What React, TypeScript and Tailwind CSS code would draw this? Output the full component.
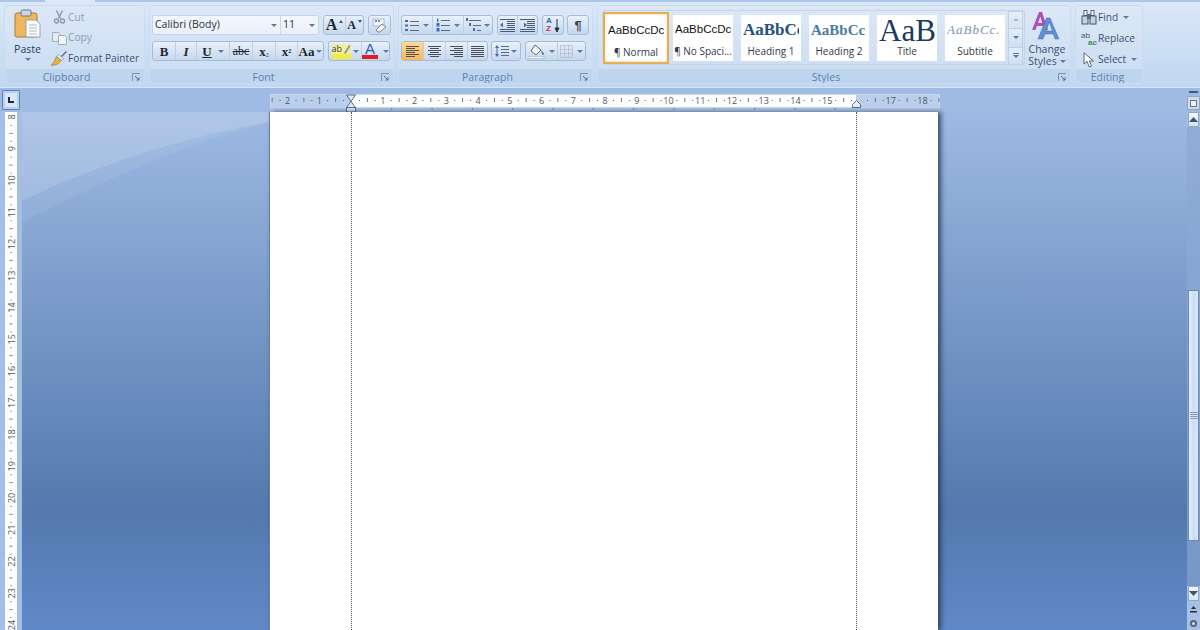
import type { ReactNode } from "react";

const Arrow = ({ c = "border-t-[#5b7ba6]" }: { c?: string }) => (
  <span className={`inline-block w-0 h-0 border-x-[3px] border-t-[3px] border-x-transparent ${c}`} />
);

const Launcher = () => (
  <svg width="9" height="9" viewBox="0 0 9 9" className="shrink-0">
    <path d="M0.5 8V0.5H8" fill="none" stroke="#7d93b0" />
    <path d="M3 3l4 4M7 4.5V7H4.5" fill="none" stroke="#4f6d94" />
  </svg>
);

function Group({ label, w, launcher = true, children }: { label: string; w: string; launcher?: boolean; children: ReactNode }) {
  return (
    <div className={`${w} h-[79px] shrink-0 flex flex-col rounded-[4px] border border-[#c9dcf1] bg-gradient-to-b from-[#dde8f6] to-[#c9dcf2] overflow-hidden`}>
      <div className="flex-1 min-h-0">{children}</div>
      <div className="h-[14px] shrink-0 flex items-center bg-[#bdd5ef] pr-[3px] pt-[2px]">
        <span className={`flex-1 text-center text-[10.5px] leading-none text-[#5a82b0] ${launcher ? "pr-[4px]" : ""}`}>{label}</span>
        {launcher && <Launcher />}
      </div>
    </div>
  );
}

const box = "flex rounded-[3px] border border-[#a6bdd9] bg-gradient-to-b from-[#e9f1fb] via-[#d7e4f4] to-[#c5d8ee]";

function Cell({ w, active, last, children }: { w: string; active?: boolean; last?: boolean; children: ReactNode }) {
  return (
    <div className={`${w} flex items-center justify-center gap-[2px] ${last ? "" : "border-r border-[#bccfe6]"} ${active ? "bg-gradient-to-b from-[#fdd99b] to-[#fbb654]" : ""}`}>
      {children}
    </div>
  );
}

function Lines({ x = 6, rows, color = "#5a6a80" }: { x?: number; rows: [number, number][]; color?: string }) {
  return (
    <>
      {rows.map(([y, w], i) => (
        <rect key={i} x={x} y={y} width={w} height="1" fill={color} />
      ))}
    </>
  );
}

const Bullets = () => (
  <svg width="14" height="13" viewBox="0 0 14 13">
    <rect x="0" y="1" width="3" height="2" fill="#3d6fb0" />
    <rect x="0" y="5.5" width="3" height="2" fill="#3d6fb0" />
    <rect x="0" y="10" width="3" height="2" fill="#3d6fb0" />
    <Lines x={5} rows={[[2, 9], [6, 9], [11, 9]]} />
  </svg>
);

const Numbers = () => (
  <svg width="14" height="14" viewBox="0 0 14 14">
    <rect x="1" y="0.5" width="1.4" height="3.5" fill="#3d6fb0" />
    <rect x="0.5" y="5" width="3" height="3.5" fill="#3d6fb0" />
    <rect x="0.5" y="10" width="3" height="3.5" fill="#3d6fb0" />
    <Lines x={5} rows={[[2, 9], [7, 9], [12, 9]]} />
  </svg>
);

const Multi = () => (
  <svg width="16" height="14" viewBox="0 0 16 14">
    <rect x="0" y="0" width="2" height="3" fill="#3d6fb0" />
    <rect x="3" y="5" width="2" height="3" fill="#3d6fb0" />
    <rect x="7" y="10" width="2" height="3" fill="#3d6fb0" />
    <Lines x={3} rows={[[2, 12]]} />
    <Lines x={7} rows={[[7, 8]]} />
    <Lines x={11} rows={[[12, 4]]} />
  </svg>
);

const Indent = ({ flip }: { flip?: boolean }) => (
  <svg width="15" height="13" viewBox="0 0 15 13">
    <Lines x={0} rows={[[0, 15], [10, 15], [12, 15]]} color="#4b5a70" />
    <Lines x={7} rows={[[2, 8], [4, 8], [6, 8], [8, 8]]} color="#4b5a70" />
    <path d={flip ? "M1 6h3V3.5L7 6 4 8.5V6" : "M6 6H3V3.5L0 6l3 2.5V6"} fill="#3d6fb0" />
  </svg>
);

const Align = ({ rows }: { rows: [number, number][] }) => (
  <svg width="13" height="11" viewBox="0 0 13 11">
    {rows.map(([x, w], i) => (
      <rect key={i} x={x} y={i * 2} width={w} height="1" fill="#4a4f58" />
    ))}
  </svg>
);

function Clipboard() {
  return (
    <svg width="28" height="29" viewBox="0 0 28 29">
      <rect x="1" y="4" width="22" height="24" rx="2" fill="#f0b65e" stroke="#a87a38" />
      <rect x="7" y="1" width="10" height="6" rx="1.5" fill="#cfd5de" stroke="#6d7683" />
      <path d="M12 11h10l4 4v13H12z" fill="#fbfcfe" stroke="#98a2b0" />
      <path d="M15 16h8M15 19h8M15 22h8M15 25h8" stroke="#aeb8c6" />
    </svg>
  );
}

const Scissors = () => (
  <svg width="13" height="14" viewBox="0 0 13 14">
    <path d="M3.5 0.5l4 8M9.5 0.5l-4 8" stroke="#8c99aa" strokeWidth="1.4" />
    <circle cx="3.5" cy="11" r="2" fill="none" stroke="#8c99aa" strokeWidth="1.4" />
    <circle cx="9.5" cy="11" r="2" fill="none" stroke="#8c99aa" strokeWidth="1.4" />
  </svg>
);

const CopyIcon = () => (
  <svg width="15" height="13" viewBox="0 0 15 13">
    <path d="M0.5 0.5h6l2 2v7h-8z" fill="#e4ebf4" stroke="#a3afc0" />
    <path d="M6.5 3.5h6l2 2v7h-8z" fill="#f2f5fa" stroke="#a3afc0" />
  </svg>
);

const Painter = () => (
  <svg width="16" height="15" viewBox="0 0 16 15">
    <path d="M10 5l5-5 1 1-5 5z" fill="#7a5a9a" />
    <path d="M7 3.5l5.5 4-2 2-5-4z" fill="#e8eef6" stroke="#7d8796" strokeWidth="0.6" />
    <path d="M5.5 5.5L10 9.5c-2 3.5-5.5 5-10 4.800 2.500-2 4-5.300 5.500-8.800z" fill="#e9b64a" stroke="#9c7424" strokeWidth="0.6" />
  </svg>
);

const Binoculars = () => (
  <svg width="16" height="15" viewBox="0 0 16 15">
    <rect x="3" y="0.5" width="3" height="5" fill="#fff" stroke="#55657c" />
    <rect x="10" y="0.5" width="3" height="5" fill="#fff" stroke="#55657c" />
    <rect x="1" y="6" width="6" height="8" fill="#c4d2e4" stroke="#44546b" />
    <rect x="9" y="6" width="6" height="8" fill="#c4d2e4" stroke="#44546b" />
    <rect x="6" y="4" width="4" height="5" fill="#5b6b82" />
  </svg>
);

const Cursor = () => (
  <svg width="12" height="16" viewBox="0 0 12 16">
    <path d="M1 .8V12l3-2.600L6.300 15l2.300-1-2.300-5H10.500z" fill="#fff" stroke="#5a6676" />
  </svg>
);

const ChangeStyles = () => (
  <svg width="30" height="28" viewBox="0 0 30 28">
    <path d="M0 18L7 0h3l6 18h-3.500l-1.200-4H5l-1.500 4zM6 11h4.300L8.300 4.500z" fill="#b14fb5" />
    <path d="M6 27l8.500-21h3.500L27 27h-4l-1.700-5H13l-2 5zM14 19h6.300l-3-9z" fill="#5e8fd0" stroke="#3e6fae" strokeWidth="0.5" />
  </svg>
);

function SmallRow({ icon, label, muted, arrow }: { icon: ReactNode; label: string; muted?: boolean; arrow?: boolean }) {
  return (
    <div className="h-[21px] flex items-center">
      <div className="w-[18px] flex justify-center shrink-0">{icon}</div>
      <span className={`text-[10.2px] whitespace-nowrap ${muted ? "text-[#8e9db2]" : "text-[#3a5273]"}`}>{label}</span>
      {arrow && <span className="ml-[5px] flex"><Arrow /></span>}
    </div>
  );
}

function StyleCard({ sample, name, active }: { sample: ReactNode; name: string; active?: boolean }) {
  return (
    <div className={`flex flex-col items-center bg-white overflow-hidden ${active ? "w-[66px] h-[52px] border-2 border-[#e5ae55] pt-[5px] shadow-[inset_0_0_3px_#f7d890]" : "w-[60px] h-[46px] pt-[3px]"}`}>
      <div className="h-[25px] w-[56px] flex items-center overflow-hidden whitespace-nowrap">{sample}</div>
      <div className="text-[10px] leading-[14px] mt-[1px] text-[#2f3a48] whitespace-nowrap">{name}</div>
    </div>
  );
}

function Ribbon() {
  const glyph = "font-['Liberation_Serif'] text-[#20262e] leading-none";
  return (
    <div className="h-[88px] shrink-0 bg-gradient-to-b from-[#dbe8f7] to-[#bfd7f1] border-b border-[#d4e8f6]">
      <div className="h-[2px] flex">
        <div className="w-[45px] bg-[#a9c7ea]" />
        <div className="w-[50px]" />
        <div className="flex-1 bg-[#a9c7ea]" />
      </div>
      <div className="flex gap-[4px] pl-[4px] pt-[3px]">
        <Group label="Clipboard" w="w-[141px]">
          <div className="flex h-full">
            <div className="w-[45px] flex flex-col items-center pt-[3px]">
              <Clipboard />
              <span className="mt-[5px] text-[10.5px] leading-[12px] text-[#22406b]">Paste</span>
              <span className="mt-[3px] flex"><Arrow /></span>
            </div>
            <div className="flex flex-col pt-[1px]">
              <SmallRow icon={<Scissors />} label="Cut" muted />
              <SmallRow icon={<CopyIcon />} label="Copy" muted />
              <SmallRow icon={<Painter />} label="Format Painter" />
            </div>
          </div>
        </Group>

        <Group label="Font" w="w-[245px]">
          <div className="flex flex-col gap-[6px] pt-[9px] pl-[2px]">
            <div className="flex gap-[4px]">
              <div className="flex w-[167px] h-[20px] rounded-[2px] border border-[#c4d5e9] bg-gradient-to-b from-[#f4f8fd] to-[#e9f0f9] text-[10.5px] text-[#2a2f38]">
                <div className="w-[128px] flex items-center justify-between px-[2px] border-r border-[#cbdaeb]">
                  <span>Calibri (Body)</span>
                  <span className="flex mr-[1px]"><Arrow c="border-t-[#6b7480]" /></span>
                </div>
                <div className="flex-1 flex items-center justify-between px-[2px]">
                  <span>11</span>
                  <span className="flex mr-[1px]"><Arrow c="border-t-[#6b7480]" /></span>
                </div>
              </div>
              <div className={`${box} w-[41px] h-[20px]`}>
                <Cell w="w-[22px]"><span className={`${glyph} font-bold text-[16px]`}>A</span><svg width="4" height="3" className="-mt-[8px]"><path d="M0 3l2-3 2 3z" fill="#2f5a8f" /></svg></Cell>
                <Cell w="flex-1" last><span className={`${glyph} font-bold text-[12px]`}>A</span><svg width="4" height="3" className="-mt-[8px]"><path d="M0 0l2 3 2-3z" fill="#2f5a8f" /></svg></Cell>
              </div>
              <div className={`${box} w-[23px] h-[20px] items-center justify-center`}>
                <svg width="17" height="15" viewBox="0 0 17 15">
                  <rect x="2" y="1" width="11" height="7" fill="#eef3fa" stroke="#8b98aa" strokeWidth="0.6" />
                  <path d="M4 3h6" stroke="#5f6c7e" strokeWidth="1.5" strokeDasharray="2 1" />
                  <path d="M5 12l6-6 4 3-6 5H7z" fill="#f6f0ee" stroke="#5f6c7e" strokeWidth="0.8" />
                </svg>
              </div>
            </div>
            <div className="flex gap-[4px]">
              <div className={`${box} w-[172px] h-[20px] text-[#20262e]`}>
                <Cell w="w-[23px]"><span className={`${glyph} font-bold text-[13px]`}>B</span></Cell>
                <Cell w="w-[21px]"><span className={`${glyph} italic font-bold text-[13px]`}>I</span></Cell>
                <Cell w="w-[33px]"><span className={`${glyph} font-bold text-[13px] underline`}>U</span><span className="ml-[4px] flex"><Arrow /></span></Cell>
                <Cell w="w-[23px]"><span className={`${glyph} text-[12px] line-through`}>abc</span></Cell>
                <Cell w="w-[23px]"><span className={`${glyph} font-bold text-[13px]`}>x<sub className="text-[6px] text-[#3d6fb0]">2</sub></span></Cell>
                <Cell w="w-[22px]"><span className={`${glyph} font-bold text-[13px]`}>x<sup className="text-[6px]">2</sup></span></Cell>
                <Cell w="flex-1" last><span className={`${glyph} font-bold text-[13px]`}>Aa</span><span className="flex"><Arrow /></span></Cell>
              </div>
              <div className={`${box} w-[62px] h-[20px]`}>
                <Cell w="w-[33px]">
                  <div className="relative w-[19px] h-[15px] flex flex-col">
                    <span className="h-[10px] bg-[#f2eca0] text-[9px] leading-[10px] text-[#3a3f46]">ab</span>
                    <div className="h-[5px] bg-[#f4ee3a]" />
                    <svg className="absolute right-0 top-0" width="8" height="11" viewBox="0 0 8 11"><path d="M1 9l5-8 1.500 1-5 8z" fill="#8b95a3" /></svg>
                  </div>
                  <Arrow />
                </Cell>
                <Cell w="flex-1" last>
                  <div className="w-[16px] flex flex-col items-center">
                    <span className="font-['Liberation_Sans'] text-[15px] leading-[12px] text-[#2c5fa8]">A</span>
                    <div className="w-[16px] h-[4px] bg-[#e01b24]" />
                  </div>
                  <span className="ml-[3px] flex"><Arrow /></span>
                </Cell>
              </div>
            </div>
          </div>
        </Group>

        <Group label="Paragraph" w="w-[195px]">
          <div className="flex flex-col gap-[6px] pt-[9px] pl-[2px]">
            <div className="flex h-[20px]">
              <div className={`${box} w-[92px]`}>
                <Cell w="w-[31px]"><Bullets /><span className="ml-[2px] flex"><Arrow /></span></Cell>
                <Cell w="w-[31px]"><Numbers /><span className="ml-[2px] flex"><Arrow /></span></Cell>
                <Cell w="flex-1" last><Multi /><Arrow /></Cell>
              </div>
              <div className={`${box} w-[41px] ml-[4px]`}>
                <Cell w="w-[20px]"><Indent /></Cell>
                <Cell w="flex-1" last><Indent flip /></Cell>
              </div>
              <div className={`${box} w-[22px] ml-[4px] items-center justify-center`}>
                <div className="w-[8px] flex flex-col font-['Liberation_Sans'] font-bold text-[8px] leading-[8px]">
                  <span className="text-[#3466a8]">A</span>
                  <span className="text-[#c2354a]">Z</span>
                </div>
                <svg width="6" height="15" viewBox="0 0 6 15">
                  <path d="M3 1v11M1 10l2 4 2-4z" fill="#2a2f38" stroke="#2a2f38" />
                </svg>
              </div>
              <div className={`${box} w-[22px] ml-[3px] items-center justify-center`}>
                <span className="font-['Liberation_Sans'] font-bold text-[13px] leading-none text-[#3b4350]">¶</span>
              </div>
            </div>
            <div className="flex h-[20px]">
              <div className={`${box} w-[87px]`}>
                <Cell w="w-[22px]" active><Align rows={[[0, 13], [0, 9], [0, 13], [0, 9], [0, 13], [0, 9]]} /></Cell>
                <Cell w="w-[22px]"><Align rows={[[0, 13], [2, 9], [0, 13], [2, 9], [0, 13], [2, 9]]} /></Cell>
                <Cell w="w-[22px]"><Align rows={[[0, 13], [4, 9], [0, 13], [4, 9], [0, 13], [4, 9]]} /></Cell>
                <Cell w="flex-1" last><Align rows={[[0, 13], [0, 13], [0, 13], [0, 13], [0, 13], [0, 13]]} /></Cell>
              </div>
              <div className={`${box} w-[30px] ml-[3px] items-center justify-center gap-[2px]`}>
                <svg width="14" height="14" viewBox="0 0 14 14">
                  <path d="M2 1l2 3H0zM2 13l2-3H0z" fill="#3d6fb0" />
                  <rect x="1.5" y="4" width="1" height="6" fill="#3d6fb0" />
                  <Lines x={6} rows={[[2, 8], [5, 8], [8, 8], [11, 8]]} />
                </svg>
                <Arrow />
              </div>
              <div className={`${box} w-[61px] ml-[4px]`}>
                <Cell w="w-[32px]">
                  <svg width="17" height="15" viewBox="0 0 17 15">
                    <path d="M7 1l6 5-5 5-5-4z" fill="#eef3fa" stroke="#5d6c80" />
                    <path d="M13 6c2 2 3 3 3 4s-2 1-2 0-.5-2-1-4z" fill="#3d78c4" />
                    <rect x="0" y="12.5" width="16" height="2" fill="#f7f9fc" stroke="#9aa7b8" strokeWidth="0.5" />
                  </svg>
                  <span className="ml-[2px] flex"><Arrow /></span>
                </Cell>
                <Cell w="flex-1" last>
                  <svg width="13" height="13" viewBox="0 0 13 13">
                    <path d="M.5.5h12v12H.5zM4.5.5v12M8.5.5v12M.5 4.5h12M.5 8.5h12" fill="none" stroke="#9fadc0" strokeDasharray="1 1" />
                  </svg>
                  <span className="ml-[2px] flex"><Arrow /></span>
                </Cell>
              </div>
            </div>
          </div>
        </Group>

        <Group label="Styles" w="w-[474px]">
          <div className="flex pl-[4px] pt-[4px]">
            <div className="w-[423px] h-[55px] flex items-center rounded-[3px] border border-[#c1d5ec]">
              <StyleCard active name="¶ Normal" sample={<span className="font-['Liberation_Sans'] text-[11.5px] text-[#111]">AaBbCcDc</span>} />
              <div className="flex gap-[8px] ml-[4px]">
                <StyleCard name="¶ No Spaci..." sample={<span className="font-['Liberation_Sans'] text-[11.5px] text-[#111]">AaBbCcDc</span>} />
                <StyleCard name="Heading 1" sample={<span className="font-['Liberation_Serif'] font-bold text-[17px] text-[#22527f]">AaBbCc</span>} />
                <StyleCard name="Heading 2" sample={<span className="font-['Liberation_Serif'] font-bold text-[15px] text-[#4a7ba8]">AaBbCc</span>} />
                <StyleCard name="Title" sample={<span className="font-['Liberation_Serif'] text-[31px] leading-[25px] text-[#1b3a5e]">AaB</span>} />
                <StyleCard name="Subtitle" sample={<span className="font-['Liberation_Serif'] italic text-[13px] tracking-[1px] text-[#7a94b5]">AaBbCc.</span>} />
              </div>
              <div className="ml-[3px] flex flex-col">
                <div className="w-[15px] h-[18px] flex items-center justify-center bg-gradient-to-b from-[#e7eef7] to-[#d9e4f2] border border-[#bed0e6]"><svg width="6" height="3"><path d="M0 3l3-3 3 3z" fill="#a9b6c6" /></svg></div>
                <div className="w-[15px] h-[18px] flex items-center justify-center bg-gradient-to-b from-[#e3edf9] to-[#cfdff2] border-x border-[#bed0e6]"><svg width="6" height="3"><path d="M0 0l3 3 3-3z" fill="#5b7ba6" /></svg></div>
                <div className="w-[15px] h-[18px] flex flex-col items-center justify-center gap-[1px] bg-gradient-to-b from-[#e3edf9] to-[#cfdff2] border border-[#bed0e6]"><div className="w-[6px] h-[1px] bg-[#5b7ba6]" /><svg width="6" height="3"><path d="M0 0l3 3 3-3z" fill="#5b7ba6" /></svg></div>
              </div>
            </div>
            <div className="w-[44px] flex flex-col items-center pt-[2px]">
              <ChangeStyles />
              <span className="mt-[3px] text-[10.5px] leading-[12px] text-[#3a5273]">Change</span>
              <span className="text-[10.5px] leading-[13px] text-[#3a5273] flex items-center gap-[3px]">Styles <Arrow /></span>
            </div>
          </div>
        </Group>

        <Group label="Editing" w="w-[68px]" launcher={false}>
          <div className="flex flex-col pt-[1px] pl-[4px]">
            <SmallRow icon={<Binoculars />} label="Find" arrow />
            <SmallRow
              icon={
                <div className="w-[16px] flex flex-col font-['Liberation_Sans'] text-[8px] leading-[7px]">
                  <span className="text-[#4a5666]">ab</span>
                  <span className="self-end font-bold text-[#3d8f52]">ac</span>
                </div>
              }
              label="Replace"
            />
            <SmallRow icon={<Cursor />} label="Select" arrow />
          </div>
        </Group>
      </div>
    </div>
  );
}

const CM = 31.75;

function HorizontalRuler() {
  const marks: ReactNode[] = [];
  for (let q = -10; q <= 74; q++) {
    const x = 81 + (q * CM) / 4;
    const m = ((q % 4) + 4) % 4;
    if (m === 0) {
      const n = Math.abs(q / 4);
      if (n !== 0 && n !== 16) {
        marks.push(<text key={q} x={x} y="9.5" fontSize="9" textAnchor="middle" fill="#4d5866" fontFamily="'Open Sans', sans-serif">{n}</text>);
      }
    } else if (m === 2) {
      marks.push(<rect key={q} x={x} y="4" width="1" height="4" fill="#6d7785" />);
    } else {
      marks.push(<rect key={q} x={x} y="6" width="1" height="1" fill="#4d5866" />);
    }
  }
  const tabs = [];
  for (let t = 1; t <= 12; t++) tabs.push(<rect key={t} x={81 + t * 40.3} y="14" width="1" height="2" fill="#6f88a8" />);
  return (
    <svg width="672" height="20" viewBox="0 0 672 20" className="shrink-0">
      <rect x="0" y="0" width="670" height="18" fill="#afc7e8" />
      <rect x="0.5" y="0.5" width="669" height="13" fill="#b9cfec" stroke="#c8d9ef" />
      <rect x="81" y="1" width="505" height="12" fill="#fff" />
      {marks}
      {tabs}
      <path d="M76.5 1h9l-4.500 6.500 4.500 6h-9l4.500-6z" fill="#dfe8f3" stroke="#53708f" />
      <rect x="76.5" y="13.5" width="9" height="4.5" fill="#dfe8f3" stroke="#53708f" />
      <path d="M582.5 13.500v-3l4-4 4 4v3z" fill="#e8eff8" stroke="#53708f" />
    </svg>
  );
}

function VerticalRuler() {
  const marks: ReactNode[] = [];
  for (let q = 0; q < 68; q++) {
    const n = 8 + q / 4;
    const y = 5 + (q * CM) / 4;
    const m = q % 4;
    if (m === 0) {
      marks.push(<text key={q} x="6" y={y} fontSize="9" textAnchor="middle" dominantBaseline="central" transform={`rotate(-90 6 ${y})`} fill="#4d5866" fontFamily="'Open Sans', sans-serif">{n}</text>);
    } else if (m === 2) {
      marks.push(<rect key={q} x="4" y={y} width="4" height="1" fill="#8a94a2" />);
    } else {
      marks.push(<rect key={q} x="5.5" y={y} width="1" height="1" fill="#3f4854" />);
    }
  }
  return (
    <svg width="12" height="518" viewBox="0 0 12 518">
      <rect width="12" height="518" fill="#fff" />
      {marks}
    </svg>
  );
}

function ScrollBtn({ d }: { d: string }) {
  return (
    <div className="h-[15px] mx-[1px] flex items-center justify-center rounded-[1px] border border-[#8fa8c9] bg-gradient-to-b from-[#f3f7fc] to-[#d8e4f3]">
      <svg width="9" height="5" viewBox="0 0 9 5"><path d={d} fill="#3f556f" /></svg>
    </div>
  );
}

function ScrollBar() {
  return (
    <div className="w-[13px] shrink-0 flex flex-col h-full bg-[#a6c0e6]">
      <ScrollBtn d="M0 5l4.500-5 4.500 5z" />
      <div className="flex-1 flex flex-col bg-gradient-to-b from-[#8fadd7] to-[#7797c6]">
        <div className="h-[163px]" />
        <div className="h-[251px] mx-[1px] flex items-center justify-center border border-[#6f88ab] bg-gradient-to-r from-[#e6f0fb] via-[#c9ddf5] to-[#dbe8f8]">
          <div className="flex flex-col gap-[1px]">
            <div className="w-[8px] h-[1px] bg-[#8a9bb3]" />
            <div className="w-[8px] h-[1px] bg-[#8a9bb3]" />
            <div className="w-[8px] h-[1px] bg-[#8a9bb3]" />
            <div className="w-[8px] h-[1px] bg-[#8a9bb3]" />
          </div>
        </div>
      </div>
      <ScrollBtn d="M0 0l4.500 5 4.500-5z" />
      <div className="h-[29px] flex flex-col items-center pt-[5px] gap-[7px]">
        <svg width="7" height="7" viewBox="0 0 7 7"><path d="M3.500 0l2.500 3H1zM0 5h7v1.500H0z" fill="#25303d" /></svg>
        <div className="w-[7px] h-[7px] rounded-full border-2 border-[#59636f] bg-[#dfe6ef]" />
      </div>
    </div>
  );
}

export default function App() {
  return (
    <div className="w-[1200px] h-[630px] overflow-hidden flex flex-col font-['Open_Sans',sans-serif] bg-[#9fbbe3]">
      <Ribbon />
      <div className="h-[24px] shrink-0 flex items-start bg-[#9fbbe3]">
        <div className="w-[22px] h-[24px] shrink-0 p-[2px]">
          <div className="h-full rounded-[1px] border border-[#5f84bb] bg-[#b9cff0] p-[2px]">
            <div className="h-full flex items-center justify-center bg-[#dbe7f6]">
              <div className="w-[6px] h-[6px] border-l-2 border-b-2 border-[#1c2a3d]" />
            </div>
          </div>
        </div>
        <div className="ml-[248px] mt-[6px]">
          <HorizontalRuler />
        </div>
        <div className="ml-auto w-[13px] flex flex-col items-center pt-[3px]">
          <div className="w-[9px] h-[2px] bg-[#3f5f8a]" />
          <div className="mt-[3px] w-[13px] h-[14px] border border-[#8fa8c9] bg-[#d3dae4] flex items-center justify-center">
            <div className="w-[7px] h-[7px] border border-[#6b7685] bg-[#eef2f7]" />
          </div>
        </div>
      </div>
      <div className="flex-1 min-h-0 flex">
        <div className="w-[22px] shrink-0 bg-[#a3bfe7] pl-[5px]">
          <VerticalRuler />
        </div>
        <div className="relative flex-1 bg-[linear-gradient(to_bottom,#9dbae3_0%,#5379ae_77%,#6089c7_100%)] pl-[247px]">
          <svg className="absolute left-0 top-0" width="248" height="112" viewBox="0 0 248 112">
            <path d="M0 110C80 70 170 28 248 10V0H0z" fill="#ffffff" fillOpacity="0.07" />
            <path d="M0 89C70 55 160 25 248 10V0H0z" fill="#ffffff" fillOpacity="0.13" />
          </svg>
          <div className="relative w-[669px] h-full flex bg-white border-l border-[#6d7f98] shadow-[3px_0_5px_rgba(30,50,80,0.8)]">
            <div className="w-[82px] h-full border-r border-dotted border-[#555]" />
            <div className="w-[505px] h-full border-r border-dotted border-[#555]" />
          </div>
        </div>
        <ScrollBar />
      </div>
    </div>
  );
}
